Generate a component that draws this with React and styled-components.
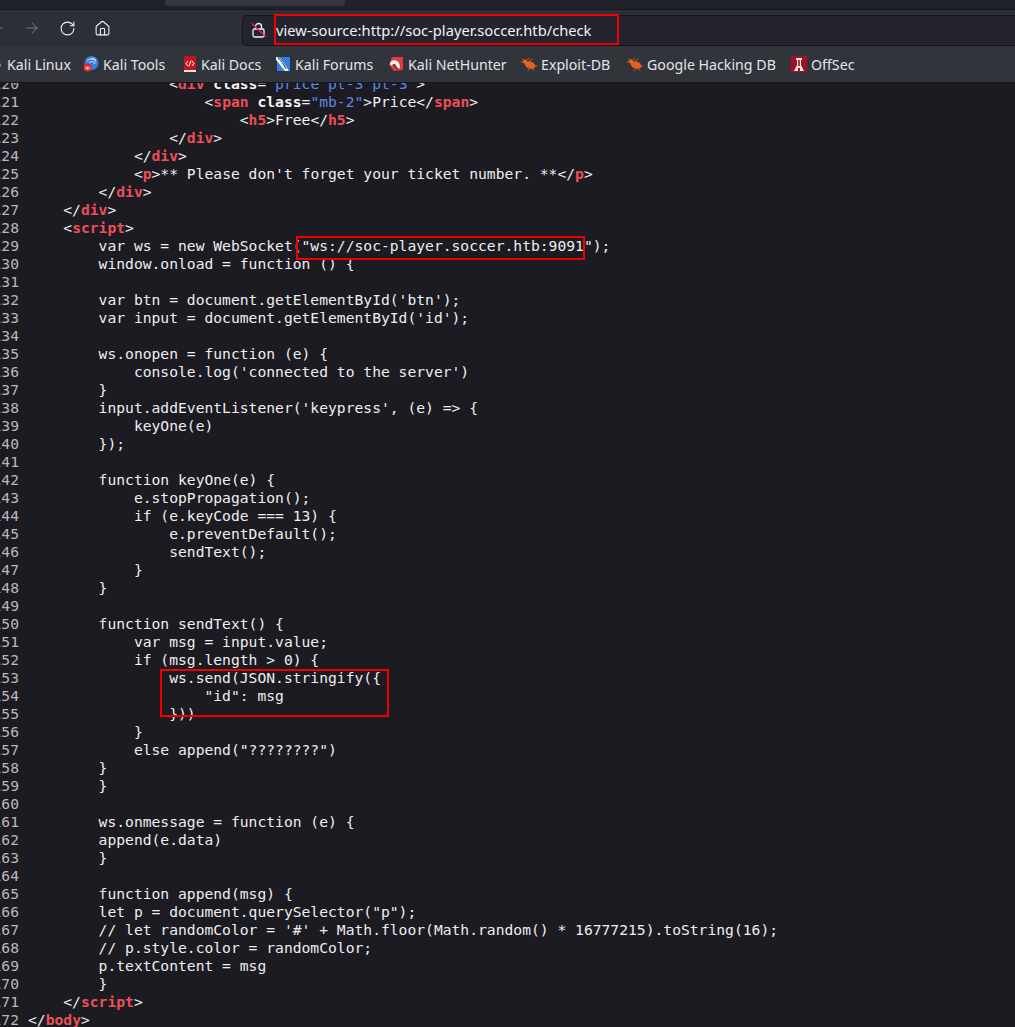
import React from "react";
import styled, { createGlobalStyle } from "styled-components";
import { ArrowLeft, ArrowRight, RotateCw, House } from "lucide-react";

const GlobalStyle = createGlobalStyle`
  html, body {
    margin: 0;
    padding: 0;
    background: #1c1b22;
  }
`;

const Page = styled.div`
  width: 1015px;
  height: 1027px;
  overflow: hidden;
  display: flex;
  flex-direction: column;
  background: #1c1b22;
`;

const TabStrip = styled.div`
  height: 9px;
  flex: none;
  padding-left: 165px;
  background: #20222b;
  border-bottom: 1px solid #15161b;
`;

const ActiveTab = styled.div`
  width: 180px;
  height: 6px;
  background: #34363f;
  border-radius: 0 0 3px 3px;
`;

const Toolbar = styled.div`
  height: 36px;
  flex: none;
  display: flex;
  align-items: center;
  background: #2d2f38;
  padding-top: 0;
`;

const NavIcons = styled.div`
  width: 242px;
  flex: none;
  display: flex;
  align-items: center;
  gap: 17px;
  margin-left: -12px;
`;

const NavButton = styled.span`
  display: flex;
  width: 18px;
  justify-content: center;
  color: ${(p) => (p.$off ? "#7b7d85" : "#f4f4f6")};
`;

const UrlField = styled.div`
  position: relative;
  flex: 1;
  height: 31px;
  margin: 4px 0 0 12px;
  display: flex;
  align-items: center;
  padding-left: 8px;
  background: #23242e;
  border: 1px solid #14151a;
  border-right: 0;
  border-radius: 5px 0 0 5px;
  box-sizing: border-box;
  font: 14.7px "Noto Sans", sans-serif;
  color: #f2f2f4;
`;

const UrlText = styled.span`
  margin-left: 9px;
  white-space: nowrap;
`;

const UrlMark = styled.div`
  position: absolute;
  left: 31px;
  top: -2px;
  width: 345px;
  height: 31px;
  box-sizing: border-box;
  border: 2px solid #f00000;
`;

const BookmarkBar = styled.div`
  height: 36px;
  flex: none;
  display: flex;
  align-items: center;
  padding-left: 0;
  margin-top: 0;
  background: #32343c;
  border-bottom: 1px solid #17181d;
  box-sizing: content-box;
  font: 14.2px "Noto Sans", sans-serif;
  color: #e3e3e6;
  overflow: hidden;
`;

const Bookmark = styled.span`
  display: flex;
  flex: none;
  align-items: center;
  gap: 4px;
  width: ${(p) => p.$w}px;
  margin-left: ${(p) => p.$left || 0}px;
  white-space: nowrap;
`;

const Source = styled.div`
  position: relative;
  flex: 1;
  overflow: hidden;
  font: 14.67px/18px "DejaVu Sans Mono", monospace;
  color: #eeeef0;
`;

const Lines = styled.div`
  margin-top: -8px;
`;

const Line = styled.div`
  display: flex;
  height: 18px;
  white-space: pre;
`;

const LineNo = styled.span`
  flex: none;
  width: 27px;
  margin: 0 9px 0 -8px;
  text-align: right;
  color: #b9b9bc;
`;

const Tag = styled.span`
  color: #ec4f58;
  font-weight: 700;
`;

const Attr = styled.span`
  color: #f4f4f6;
  font-weight: 700;
`;

const Val = styled.span`
  color: #5b88e4;
`;

const Mark = styled.div`
  position: absolute;
  left: ${(p) => p.$x}px;
  top: ${(p) => p.$y}px;
  width: ${(p) => p.$w}px;
  height: ${(p) => p.$h}px;
  box-sizing: border-box;
  border: 2px solid #f00000;
`;

const tag = (s) => <Tag>{s}</Tag>;
const attr = (s) => <Attr>{s}</Attr>;
const val = (s) => <Val>{s}</Val>;

const sp = (n) => " ".repeat(n);

const code = [
  [sp(16), "<", tag("div"), " ", attr("class"), "=", val('"price pt-3 pt-3"'), ">"],
  [sp(20), "<", tag("span"), " ", attr("class"), "=", val('"mb-2"'), ">Price</", tag("span"), ">"],
  [sp(24), "<", tag("h5"), ">Free</", tag("h5"), ">"],
  [sp(16), "</", tag("div"), ">"],
  [sp(12), "</", tag("div"), ">"],
  [sp(12), "<", tag("p"), ">** Please don't forget your ticket number. **</", tag("p"), ">"],
  [sp(8), "</", tag("div"), ">"],
  [sp(4), "</", tag("div"), ">"],
  [sp(4), "<", tag("script"), ">"],
  [sp(8) + 'var ws = new WebSocket("ws://soc-player.soccer.htb:9091");'],
  [sp(8) + "window.onload = function () {"],
  [""],
  [sp(8) + "var btn = document.getElementById('btn');"],
  [sp(8) + "var input = document.getElementById('id');"],
  [""],
  [sp(8) + "ws.onopen = function (e) {"],
  [sp(12) + "console.log('connected to the server')"],
  [sp(8) + "}"],
  [sp(8) + "input.addEventListener('keypress', (e) => {"],
  [sp(12) + "keyOne(e)"],
  [sp(8) + "});"],
  [""],
  [sp(8) + "function keyOne(e) {"],
  [sp(12) + "e.stopPropagation();"],
  [sp(12) + "if (e.keyCode === 13) {"],
  [sp(16) + "e.preventDefault();"],
  [sp(16) + "sendText();"],
  [sp(12) + "}"],
  [sp(8) + "}"],
  [""],
  [sp(8) + "function sendText() {"],
  [sp(12) + "var msg = input.value;"],
  [sp(12) + "if (msg.length > 0) {"],
  [sp(16) + "ws.send(JSON.stringify({"],
  [sp(20) + '"id": msg'],
  [sp(16) + "}))"],
  [sp(12) + "}"],
  [sp(12) + 'else append("????????")'],
  [sp(8) + "}"],
  [sp(8) + "}"],
  [""],
  [sp(8) + "ws.onmessage = function (e) {"],
  [sp(8) + "append(e.data)"],
  [sp(8) + "}"],
  [""],
  [sp(8) + "function append(msg) {"],
  [sp(8) + 'let p = document.querySelector("p");'],
  [sp(8) + "// let randomColor = '#' + Math.floor(Math.random() * 16777215).toString(16);"],
  [sp(8) + "// p.style.color = randomColor;"],
  [sp(8) + "p.textContent = msg"],
  [sp(8) + "}"],
  [sp(4), "</", tag("script"), ">"],
  ["</", tag("body"), ">"],
];

function LockIcon() {
  return (
    <svg width="16" height="16" viewBox="0 0 16 16" fill="none">
      <rect x="2" y="7" width="11" height="8" rx="1.5" stroke="#f4f4f6" strokeWidth="1.3" />
      <path d="M4.5 7V4.5a3 3 0 0 1 6 0V7" stroke="#f4f4f6" strokeWidth="1.3" />
      <path d="M1 1.5 15 15" stroke="#e22850" strokeWidth="1.4" />
    </svg>
  );
}

function Dragon() {
  return (
    <svg width="16" height="16" viewBox="0 0 16 16" fill="none">
      <path d="M2 4c5-2 10 0 11 5-2-2-4-2-6-1 2 1 3 3 3 6" stroke="#9a9ca4" strokeWidth="1.4" />
    </svg>
  );
}

function ToolsIcon() {
  return (
    <svg width="16" height="18" viewBox="0 0 16 18" fill="none">
      <circle cx="8.5" cy="8" r="7" fill="#3a7fdc" />
      <path d="M4 6c3-3 7-3 9 1M6 8c2-2 5-2 6 1M8 4c2-1 4 0 5 1" stroke="#e8f0fb" strokeWidth="0.9" />
      <circle cx="4.5" cy="12.5" r="4" fill="#e3232c" />
      <path d="M3 14.5v-3M4.5 14.5v-3M6 14.5v-3" stroke="#fff" strokeWidth="0.8" />
    </svg>
  );
}

function DocsIcon() {
  return (
    <svg width="14" height="18" viewBox="0 0 14 18" fill="none">
      <rect x="1" y="1" width="12" height="15" rx="1" fill="#c3161c" />
      <rect x="1" y="15" width="12" height="2" fill="#ece6e0" />
      <path d="M5 6 3 8.500l2 2.500M9 6l2 2.500L9 11M8 5.500 6 11.500" stroke="#fff" strokeWidth="1" />
    </svg>
  );
}

function ForumsIcon() {
  return (
    <svg width="16" height="16" viewBox="0 0 16 16" fill="none">
      <path d="M2 1h13v13a1 1 0 0 1-1 1H3a1 1 0 0 1-1-1z" fill="#2f80e4" />
      <path d="M1 1c3 0 5 2 7 5s4 6 6 9h-4C7 12 4 7 1 4z" fill="#f2f4f6" />
      <path d="M3 2c3 2 6 7 8 11" stroke="#30343a" strokeWidth="1" />
    </svg>
  );
}

function HunterIcon() {
  return (
    <svg width="16" height="16" viewBox="0 0 16 16" fill="none">
      <path d="M4 1h11v13L6 15 1 9z" fill="#e23a3e" />
      <path d="M2 8c0-3 4-5 7-3 2 1 3 4 3 7l-3 1c0-3-1-5-3-5-1.500 0-2 1-1.500 2.500z" fill="#f6f6f6" />
      <path d="M5 8.500 10 13" stroke="#3a3c44" strokeWidth="1.200" />
    </svg>
  );
}

function BugIcon() {
  return (
    <svg width="16" height="14" viewBox="0 0 16 14" fill="none">
      <ellipse cx="9" cy="8" rx="5.500" ry="3.600" transform="rotate(22 9 8)" fill="#e85f1c" />
      <circle cx="4" cy="4.500" r="2" fill="#e8741c" />
      <path d="M1 1.500 4 4M0 5h3M6 3l2-2M9 4l2-2.500M8 12l-1 1.500M12 12l1 1.500M13 9h3" stroke="#d9601c" strokeWidth="1" />
    </svg>
  );
}

function OffSecIcon() {
  return (
    <svg width="16" height="16" viewBox="0 0 16 16" fill="none">
      <rect width="16" height="16" fill="#a3101f" />
      <path d="M5 2h6v2h-1v5l3 6H3l3-6V4H5z" fill="#f4e9e9" />
      <path d="M7.200 4h1.600v6H7.200zM7 12h2v3H7z" fill="#a3101f" />
    </svg>
  );
}

const bookmarks = [
  { label: "Kali Linux", Icon: Dragon, width: 96, left: -13 },
  { label: "Kali Tools", Icon: ToolsIcon, width: 100 },
  { label: "Kali Docs", Icon: DocsIcon, width: 92 },
  { label: "Kali Forums", Icon: ForumsIcon, width: 113 },
  { label: "Kali NetHunter", Icon: HunterIcon, width: 133 },
  { label: "Exploit-DB", Icon: BugIcon, width: 106 },
  { label: "Google Hacking DB", Icon: BugIcon, width: 164 },
  { label: "OffSec", Icon: OffSecIcon, width: 80 },
];

export default function App() {
  return (
    <Page>
      <GlobalStyle />
      <TabStrip>
        <ActiveTab />
      </TabStrip>
      <Toolbar>
        <NavIcons>
          <NavButton $off>
            <ArrowLeft size={18} strokeWidth={1.3} />
          </NavButton>
          <NavButton $off>
            <ArrowRight size={18} strokeWidth={1.3} />
          </NavButton>
          <NavButton>
            <RotateCw size={17} strokeWidth={1.5} />
          </NavButton>
          <NavButton>
            <House size={17} strokeWidth={1.5} />
          </NavButton>
        </NavIcons>
        <UrlField>
          <LockIcon />
          <UrlText>view-source:http://soc-player.soccer.htb/check</UrlText>
          <UrlMark />
        </UrlField>
      </Toolbar>
      <BookmarkBar>
        {bookmarks.map((b) => (
          <Bookmark key={b.label} $w={b.width} $left={b.left}>
            <b.Icon />
            {b.label}
          </Bookmark>
        ))}
      </BookmarkBar>
      <Source>
        <Lines>
          {code.map((parts, i) => (
            <Line key={i}>
              <LineNo>{120 + i}</LineNo>
              <span>
                {parts.map((part, j) => (
                  <React.Fragment key={j}>{part}</React.Fragment>
                ))}
              </span>
            </Line>
          ))}
        </Lines>
        <Mark $x={296} $y={153} $w={289} $h={24} />
        <Mark $x={160} $y={586} $w={229} $h={48} />
      </Source>
    </Page>
  );
}
